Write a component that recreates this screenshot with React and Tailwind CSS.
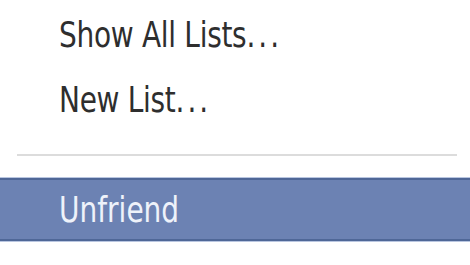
export default function App() {
  const font = { fontFamily: '"DejaVu Sans", Verdana, sans-serif' };

  return (
    <div className="w-[470px] h-[265px] bg-white overflow-hidden pt-[2px]" style={font}>
      <div className="h-[65px] flex items-center pl-[59px]">
        <span className="inline-block origin-left scale-y-[1.28] text-[28px] leading-none text-[#2e2e2e] tracking-[-0.3px]">
          Show All Lists<span className="tracking-[3px]">...</span>
        </span>
      </div>
      <div className="h-[65px] flex items-center pl-[59px]">
        <span className="inline-block origin-left scale-y-[1.28] text-[28px] leading-none text-[#2e2e2e] tracking-[-0.3px]">
          New List<span className="tracking-[3px]">...</span>
        </span>
      </div>
      <div className="h-[45px] flex items-center">
        <div className="ml-[17px] w-[440px] h-[2px] bg-[#dcdcdc]" />
      </div>
      <div className="h-[65px] border-t border-b border-[#b9c6e0]">
        <div className="h-full flex items-center pl-[59px] bg-[#6c82b3] border-t-2 border-b-2 border-[#4f6797]">
          <span className="inline-block origin-left scale-y-[1.28] text-[28px] leading-none text-[#eef2fa]">
            Unfriend
          </span>
        </div>
      </div>
    </div>
  );
}
